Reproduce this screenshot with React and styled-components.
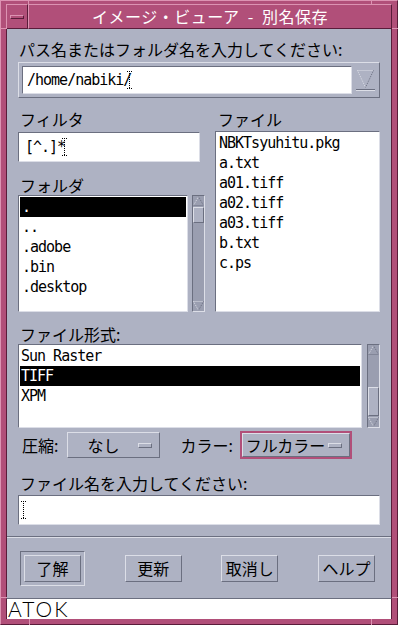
import styled, { createGlobalStyle } from 'styled-components';

const colors = {
  frame: '#b14f79',
  frameLight: '#dc93b2',
  frameDark: '#5a1c3a',
  bg: '#aeb2c3',
  light: '#dcdee7',
  dark: '#6b6f80',
  trough: '#9a9eb0',
  white: '#ffffff',
};

const jp = `"Noto Sans CJK JP", "DejaVu Sans", sans-serif`;
const mono = `"DejaVu Sans Mono", "Liberation Mono", monospace`;

const GlobalStyle = createGlobalStyle`
  body {
    margin: 0;
    background: ${colors.frame};
  }
  * {
    box-sizing: border-box;
  }
`;

const raised = `
  border: 1px solid;
  border-color: ${colors.light} ${colors.dark} ${colors.dark} ${colors.light};
`;

const sunken = `
  border: 1px solid;
  border-color: ${colors.dark} ${colors.light} ${colors.light} ${colors.dark};
`;

const Window = styled.div`
  position: relative;
  width: 398px;
  height: 625px;
  background: ${colors.frame};
  border: 1px solid;
  border-color: ${colors.frameLight} ${colors.frameDark} ${colors.frameDark} ${colors.frameLight};
  padding: 3px 5px 5px 5px;
  display: flex;
  flex-direction: column;
  font-family: ${jp};
  color: #000;
`;

const FrameTick = styled.span`
  position: absolute;
  left: ${(p) => p.$x}px;
  top: ${(p) => p.$y}px;
  width: ${(p) => p.$w}px;
  height: ${(p) => p.$h}px;
  background: ${colors.frameLight};
`;

const TitleBar = styled.div`
  display: flex;
  height: 25px;
`;

const MenuButton = styled.div`
  width: 22px;
  border: 1px solid;
  border-color: ${colors.frameLight} ${colors.frameDark} ${colors.frameDark} ${colors.frameLight};
  display: flex;
  align-items: center;
  justify-content: center;
`;

const MenuDash = styled.div`
  width: 14px;
  height: 4px;
  border: 1px solid;
  border-color: ${colors.frameLight} ${colors.frameDark} ${colors.frameDark} ${colors.frameLight};
`;

const TitleText = styled.div`
  flex: 1;
  border: 1px solid;
  border-color: ${colors.frameLight} ${colors.frameDark} ${colors.frameDark} ${colors.frameLight};
  color: ${colors.white};
  font-size: 16px;
  line-height: 23px;
  text-align: center;
  letter-spacing: 0.5px;
  white-space: pre;
`;

const Body = styled.div`
  flex: 1;
  background: ${colors.bg};
  border-left: 1px solid ${colors.frameDark};
  border-right: 1px solid ${colors.frameDark};
  display: flex;
  flex-direction: column;
`;

const Content = styled.div`
  padding: 10px 11px 0 11px;
  display: flex;
  flex-direction: column;
`;

const Label = styled.div`
  font-size: 16px;
  line-height: 20px;
  height: 20px;
  padding-left: ${(p) => p.$indent ?? 1}px;
  margin-top: ${(p) => p.$mt || 0}px;
  white-space: nowrap;
`;

const ComboFrame = styled.div`
  ${raised}
  margin-top: 3px;
  height: 36px;
  padding: 3px 2px 3px 3px;
  display: flex;
  gap: 2px;
`;

const TextField = styled.div`
  ${sunken}
  flex: ${(p) => (p.$grow ? 1 : 'none')};
  width: ${(p) => (p.$width ? `${p.$width}px` : 'auto')};
  height: ${(p) => p.$h || 30}px;
  margin-top: ${(p) => p.$mt || 0}px;
  background: ${colors.white};
  display: flex;
  align-items: center;
  padding-left: ${(p) => p.$pl || 4}px;
  font-family: ${mono};
  font-size: 15px;
  letter-spacing: -1px;
  white-space: pre;
`;

const ArrowBox = styled.div`
  width: 23px;
  display: flex;
  align-items: center;
  justify-content: center;
`;

const CaretMark = styled.svg`
  flex: none;
  margin-left: ${(p) => p.$ml || 0}px;
`;

const Columns = styled.div`
  display: grid;
  grid-template-columns: 187px 1fr;
  column-gap: 10px;
  margin-top: 11px;
`;

const Column = styled.div`
  display: flex;
  flex-direction: column;
`;

const ListRow = styled.div`
  display: flex;
  gap: ${(p) => p.$gap}px;
  height: ${(p) => p.$h}px;
  margin-top: ${(p) => p.$mt || 0}px;
`;

const ListBox = styled.div`
  ${sunken}
  flex: 1;
  height: ${(p) => p.$h}px;
  margin-top: ${(p) => p.$mt || 0}px;
  background: ${colors.white};
  padding: 1px;
  font-family: ${mono};
  font-size: 15px;
  letter-spacing: -1px;
  overflow: hidden;
`;

const Item = styled.div`
  height: 20px;
  line-height: 20px;
  padding-left: ${(p) => p.$pl ?? 2}px;
  white-space: pre;
  background: ${(p) => (p.$selected ? '#000' : 'transparent')};
  color: ${(p) => (p.$selected ? colors.white : '#000')};
`;

const ScrollBar = styled.div`
  ${sunken}
  width: 13px;
  background: ${colors.trough};
  display: flex;
  flex-direction: column;
`;

const Trough = styled.div`
  flex: 1;
  display: flex;
  flex-direction: column;
  justify-content: ${(p) => (p.$end ? 'flex-end' : 'flex-start')};
`;

const Thumb = styled.div`
  ${raised}
  height: ${(p) => p.$h}px;
  background: ${colors.bg};
`;

const OptionRow = styled.div`
  display: flex;
  align-items: center;
  height: 28px;
  margin-top: 3px;
  font-size: 16px;
`;

const OptionLabel = styled.span`
  margin-left: ${(p) => p.$ml}px;
  margin-right: ${(p) => p.$mr}px;
  white-space: nowrap;
`;

const OptionMenu = styled.div`
  width: ${(p) => p.$w}px;
  height: ${(p) => (p.$focused ? 28 : 26)}px;
  border: ${(p) => (p.$focused ? `2px solid ${colors.frame}` : 'none')};
  display: flex;
`;

const OptionFace = styled.div`
  ${raised}
  flex: 1;
  display: flex;
  align-items: center;
  padding-right: 7px;
`;

const OptionText = styled.span`
  flex: 1;
  text-align: center;
  white-space: nowrap;
`;

const OptionIndicator = styled.span`
  ${raised}
  width: 14px;
  height: 5px;
`;

const Separator = styled.div`
  height: 2px;
  margin-top: 11px;
  border-top: 1px solid ${colors.dark};
  border-bottom: 1px solid ${colors.light};
`;

const ButtonRow = styled.div`
  flex: 1;
  display: flex;
  align-items: center;
  justify-content: space-between;
  padding: 0 16px 0 13px;
`;

const DefaultFrame = styled.div`
  ${sunken}
  padding: 3px;
`;

const PushButton = styled.button`
  ${raised}
  width: 57px;
  height: 27px;
  padding: 0;
  background: ${colors.bg};
  font-family: ${jp};
  font-size: 16px;
  color: #000;
  line-height: 25px;
`;

const StatusBar = styled.div`
  height: 21px;
  background: ${colors.white};
  border-top: 1px solid ${colors.dark};
  border-left: 1px solid ${colors.frameDark};
  border-right: 1px solid ${colors.frameDark};
  padding-left: 1px;
  font-family: Lato, "Liberation Sans", sans-serif;
  font-weight: 300;
  font-size: 21px;
  line-height: 20px;
  letter-spacing: 2px;
`;

function Caret({ ml }) {
  return (
    <CaretMark $ml={ml} width="5" height="18" viewBox="0 0 5 18">
      <path d="M0 0.5h5M0 17.5h5M2.5 0v18" stroke="#000" strokeWidth="1" strokeDasharray="1 1" fill="none" />
    </CaretMark>
  );
}

function ComboArrow() {
  return (
    <svg width="21" height="26" viewBox="0 0 21 26">
      <path d="M2.5 3.5h16" stroke={colors.light} strokeDasharray="1 1" />
      <path d="M2.5 3.5L10.5 20.5" stroke={colors.light} strokeDasharray="1 1" />
      <path d="M18.5 3.5L10.5 20.5" stroke={colors.dark} strokeDasharray="1 1" />
      <path d="M1 22.5h19" stroke={colors.dark} />
      <path d="M1 23.5h19" stroke={colors.light} />
    </svg>
  );
}

function ScrollArrow({ down }) {
  return (
    <svg width="11" height="11" viewBox="0 0 11 11">
      {down ? (
        <>
          <path d="M0.5 1.5h10M0.5 1.5L5.5 10.5" stroke={colors.light} strokeDasharray="1 1" fill="none" />
          <path d="M10.5 1.5L5.5 10.5" stroke={colors.dark} strokeDasharray="1 1" fill="none" />
        </>
      ) : (
        <>
          <path d="M5.5 0.5L0.5 9.5" stroke={colors.light} strokeDasharray="1 1" fill="none" />
          <path d="M5.5 0.5L10.5 9.5M0.5 9.5h10" stroke={colors.dark} strokeDasharray="1 1" fill="none" />
        </>
      )}
    </svg>
  );
}

function Scroller({ thumb, end }) {
  return (
    <ScrollBar>
      <ScrollArrow />
      <Trough $end={end}>
        <Thumb $h={thumb} />
      </Trough>
      <ScrollArrow down />
    </ScrollBar>
  );
}

const folders = ['.', '..', '.adobe', '.bin', '.desktop'];
const files = ['NBKTsyuhitu.pkg', 'a.txt', 'a01.tiff', 'a02.tiff', 'a03.tiff', 'b.txt', 'c.ps'];
const formats = ['Sun Raster', 'TIFF', 'XPM'];

const ticks = [
  [27, 0, 1, 4], [370, 0, 1, 4],
  [28, 618, 1, 6], [370, 618, 1, 6],
  [0, 27, 6, 1], [0, 596, 6, 1],
  [391, 27, 6, 1], [391, 596, 6, 1],
];

export default function App() {
  return (
    <>
      <GlobalStyle />
      <Window>
        {ticks.map(([x, y, w, h]) => (
          <FrameTick key={`${x}-${y}`} $x={x} $y={y} $w={w} $h={h} />
        ))}
        <TitleBar>
          <MenuButton><MenuDash /></MenuButton>
          <TitleText>イメージ・ビューア  -  別名保存</TitleText>
        </TitleBar>
        <Body>
          <Content>
            <Label>パス名またはフォルダ名を入力してください:</Label>
            <ComboFrame>
              <TextField $grow $h={28}>
                /home/nabiki/
                <Caret ml={-4} />
              </TextField>
              <ArrowBox><ComboArrow /></ArrowBox>
            </ComboFrame>

            <Columns>
              <Column>
                <Label $indent={2}>フィルタ</Label>
                <TextField $width={182} $mt={3} $pl={6}>
                  [^.]*
                  <Caret ml={-3} />
                </TextField>
                <Label $indent={2} $mt={13}>フォルダ</Label>
                <ListRow $gap={4} $h={117}>
                  <ListBox $h={117}>
                    {folders.map((f, i) => (
                      <Item key={f} $selected={i === 0}>{f}</Item>
                    ))}
                  </ListBox>
                  <Scroller thumb={16} />
                </ListRow>
              </Column>
              <Column>
                <Label $indent={3}>ファイル</Label>
                <ListBox $h={181} $mt={2}>
                  {files.map((f) => (
                    <Item key={f}>{f}</Item>
                  ))}
                </ListBox>
              </Column>
            </Columns>

            <Label $indent={2} $mt={12}>ファイル形式:</Label>
            <ListRow $gap={5} $h={84}>
              <ListBox $h={84}>
                {formats.map((f) => (
                  <Item key={f} $pl={1} $selected={f === 'TIFF'}>{f}</Item>
                ))}
              </ListBox>
              <Scroller thumb={29} end />
            </ListRow>

            <OptionRow>
              <OptionLabel $ml={4} $mr={9}>圧縮:</OptionLabel>
              <OptionMenu $w={93}>
                <OptionFace>
                  <OptionText>なし</OptionText>
                  <OptionIndicator />
                </OptionFace>
              </OptionMenu>
              <OptionLabel $ml={20} $mr={7}>カラー:</OptionLabel>
              <OptionMenu $w={112} $focused>
                <OptionFace>
                  <OptionText>フルカラー</OptionText>
                  <OptionIndicator />
                </OptionFace>
              </OptionMenu>
            </OptionRow>

            <Label $indent={2} $mt={14}>ファイル名を入力してください:</Label>
            <TextField $mt={2} $pl={2}>
              <Caret />
            </TextField>
          </Content>
          <Separator />
          <ButtonRow>
            <DefaultFrame>
              <PushButton>了解</PushButton>
            </DefaultFrame>
            <PushButton>更新</PushButton>
            <PushButton>取消し</PushButton>
            <PushButton>ヘルプ</PushButton>
          </ButtonRow>
        </Body>
        <StatusBar>ATOK</StatusBar>
      </Window>
    </>
  );
}
